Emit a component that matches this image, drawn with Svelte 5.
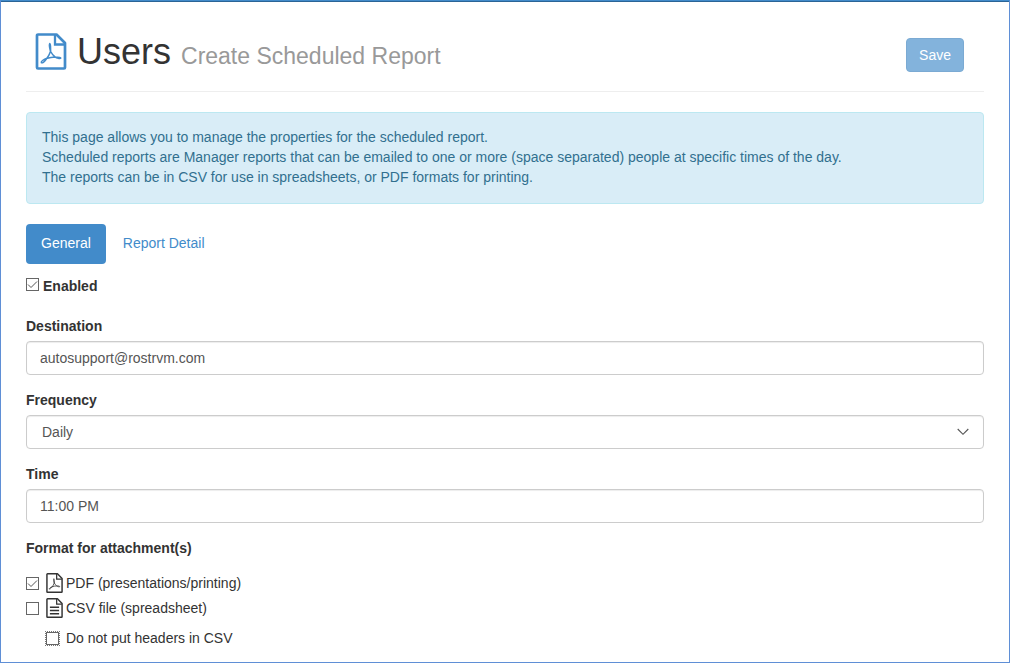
<script>
  let enabled = $state(true);
  let destination = $state("autosupport@rostrvm.com");
  let frequency = $state("Daily");
  let time = $state("11:00 PM");
  let pdf = $state(true);
  let csv = $state(false);
  let noHeaders = $state(false);

  const frequencies = ["Daily", "Weekly", "Monthly"];
</script>

{#snippet fileIcon(kind)}
  <svg class="file-icon" viewBox="0 0 31 37" fill="none" stroke="currentColor" aria-hidden="true">
    <path d="M21 1.500H2.500a1 1 0 0 0-1 1v32a1 1 0 0 0 1 1h26a1 1 0 0 0 1-1V10z" stroke-width="2.700" stroke-linejoin="round" />
    <path d="M19.500 2v9.500H29" stroke-width="2.300" />
    {#if kind === "pdf"}
      <path
        d="M14.300 10.500c-1.300 1.500.4 6 .7 8-.9 2.800-2.400 5.400-4.300 7.700-1.500 2-3.700 4.200-4.900 3.500-.5-1.200 2.200-3.200 5-4.200 3.200-1 6.200-1.500 9-1.600 2.300 0 5.400.2 5.500 1.200-.8 1.100-4 .1-5.800-1.300-2-1.500-3.400-3.400-4.300-5.300-.4-2.200.4-7-.9-8z"
        stroke-width="1.500"
        stroke-linejoin="round"
      />
    {:else}
      <path d="M7 17h17M7 23h17M7 29h17" stroke-width="2.600" />
    {/if}
  </svg>
{/snippet}

<main class="page">
  <header>
    <h1>
      {@render fileIcon("pdf")}
      <span>Users <small>Create Scheduled Report</small></span>
    </h1>
    <button type="button" class="save" disabled>Save</button>
  </header>

  <div class="alert">
    This page allows you to manage the properties for the scheduled report.<br />
    Scheduled reports are Manager reports that can be emailed to one or more (space separated) people at specific times of the day.<br />
    The reports can be in CSV for use in spreadsheets, or PDF formats for printing.
  </div>

  <nav>
    <a class="active" href="#general">General</a>
    <a href="#detail">Report Detail</a>
  </nav>

  <form>
    <label class="check enabled">
      <input type="checkbox" bind:checked={enabled} />
      Enabled
    </label>

    <div class="group">
      <label for="destination">Destination</label>
      <input id="destination" class="control" type="text" bind:value={destination} />
    </div>

    <div class="group">
      <label for="frequency">Frequency</label>
      <div class="select">
        <select id="frequency" class="control" bind:value={frequency}>
          {#each frequencies as item}
            <option>{item}</option>
          {/each}
        </select>
        <svg viewBox="0 0 12 8" fill="none" stroke="#555" aria-hidden="true">
          <path d="M.7 1 6 6.300 11.300 1" stroke-width="1.100" />
        </svg>
      </div>
    </div>

    <div class="group">
      <label for="time">Time</label>
      <input id="time" class="control" type="text" bind:value={time} />
    </div>

    <fieldset>
      <legend>Format for attachment(s)</legend>
      <label class="check format">
        <input type="checkbox" bind:checked={pdf} />
        {@render fileIcon("pdf")}
        PDF (presentations/printing)
      </label>
      <label class="check format">
        <input type="checkbox" bind:checked={csv} />
        {@render fileIcon("csv")}
        CSV file (spreadsheet)
      </label>
      <label class="check nested">
        <input type="checkbox" bind:checked={noHeaders} />
        Do not put headers in CSV
      </label>
    </fieldset>
  </form>
</main>

<style>
  :global(body) {
    margin: 0;
    background: #fff;
  }

  .page,
  .page :global(*) {
    box-sizing: border-box;
  }

  .page {
    padding: 30px 25px 14px;
    border: 1px solid #5f8fd6;
    border-top-color: #428bca;
    box-shadow: inset 0 1px #2a6496;
    color: #333;
    font: 14px/20px "Liberation Sans", Arial, sans-serif;
  }

  header {
    display: flex;
    justify-content: space-between;
    align-items: flex-start;
    height: 61px;
    padding: 0 20px 0 9px;
    border-bottom: 1px solid #eee;
  }

  h1 {
    display: flex;
    gap: 10px;
    margin: 0;
    font-size: 36px;
    font-weight: 400;
    line-height: 41px;
  }

  h1 .file-icon {
    width: 32px;
    height: 37px;
    margin-top: 2px;
    color: #428bca;
  }

  h1 small {
    color: #999;
    font-size: 23px;
    line-height: 1;
  }

  .save {
    height: 34px;
    margin-top: 7px;
    padding: 0 12px;
    border: 1px solid #357ebd;
    border-radius: 4px;
    background: #428bca;
    color: #fff;
    font: inherit;
    opacity: 0.65;
  }

  .alert {
    margin: 20px 0;
    padding: 14px 15px 16px;
    border: 1px solid #bce8f1;
    border-radius: 4px;
    background: #d9edf7;
    color: #31708f;
  }

  nav {
    display: flex;
    gap: 2px;
  }

  nav a {
    padding: 9px 15px 11px;
    border-radius: 4px;
    color: #428bca;
    text-decoration: none;
  }

  nav a.active {
    background: #428bca;
    color: #fff;
  }

  .check {
    display: flex;
    align-items: center;
  }

  .check input {
    appearance: none;
    flex: none;
    width: 13px;
    height: 13px;
    margin: 0;
    border: 1px solid #666;
    background: #fff;
  }

  .check input:checked {
    background: url("data:image/svg+xml,%3Csvg xmlns='http://www.w3.org/2000/svg' viewBox='0 0 11 11'%3E%3Cpath d='M1 5.500 4 8.500 10 2.500' fill='none' stroke='%23555'/%3E%3C/svg%3E");
  }

  .enabled {
    align-items: flex-start;
    gap: 4px;
    margin: 12px 0 20px;
    font-weight: 700;
  }

  .enabled input {
    margin-top: 2px;
  }

  .group {
    margin-bottom: 15px;
  }

  .group > label {
    display: block;
    margin-bottom: 5px;
    font-weight: 700;
  }

  .control {
    display: block;
    width: 100%;
    height: 34px;
    padding: 0 13px;
    border: 1px solid #ccc;
    border-radius: 4px;
    background: #fff;
    box-shadow: inset 0 1px 1px rgba(0, 0, 0, 0.075);
    color: #555;
    font: inherit;
  }

  .select {
    display: grid;
    align-items: center;
  }

  .select > * {
    grid-area: 1 / 1;
  }

  .select select {
    appearance: none;
    padding: 0 15px;
  }

  .select svg {
    justify-self: end;
    width: 12px;
    height: 8px;
    margin-right: 15px;
    pointer-events: none;
  }

  fieldset {
    margin: 0;
    padding: 0;
    border: 0;
  }

  legend {
    margin-bottom: 15px;
    padding: 0;
    font-weight: 700;
  }

  .format {
    margin-bottom: 5px;
  }

  .format .file-icon {
    width: 17px;
    height: 20px;
    margin: 0 3px 0 7px;
  }

  .nested {
    gap: 7px;
    margin: 10px 0 0 20px;
  }

  .nested input {
    outline: 1px dotted #777;
  }
</style>
